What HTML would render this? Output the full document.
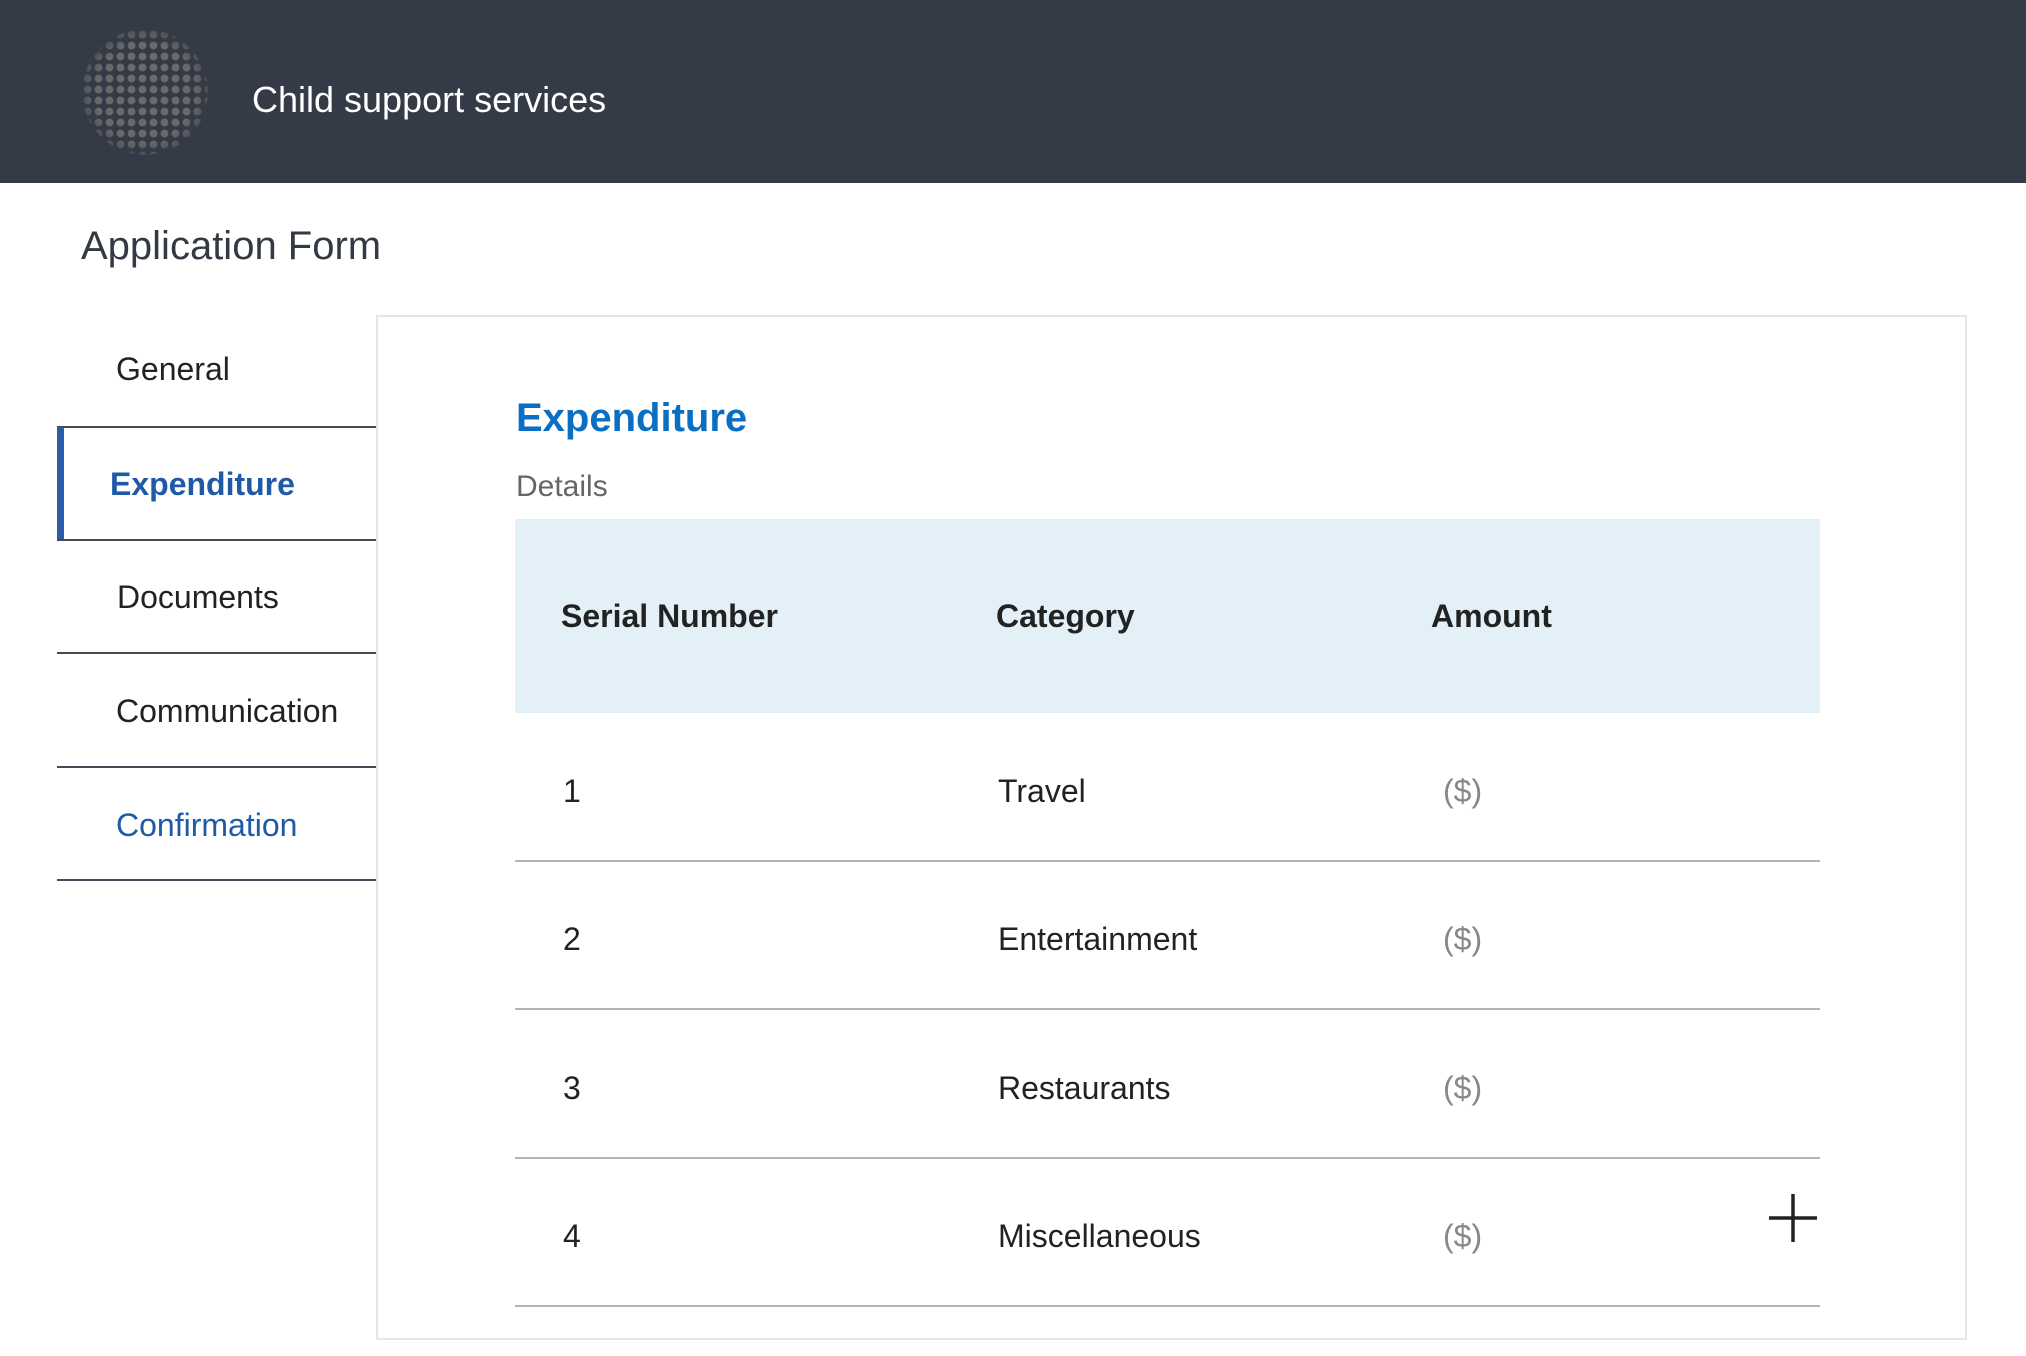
<!DOCTYPE html>
<html><head><meta charset="utf-8">
<style>
*{margin:0;padding:0;box-sizing:border-box}
body{width:2026px;height:1356px;background:#fff;font-family:"Liberation Sans",sans-serif;position:relative;overflow:hidden;color:#222}
.hdr{position:absolute;left:0;top:0;width:2026px;height:183px;background:#343a46}
.logo{position:absolute;left:82px;top:29px;width:126px;height:126px;border-radius:50%;
background:radial-gradient(circle,#6a6a6a 0 3.6px,transparent 4.2px) 0 0/11px 11px;
-webkit-mask-image:radial-gradient(circle,#000 55%,rgba(0,0,0,.5) 70%,transparent 72%);mask-image:radial-gradient(circle,#000 55%,rgba(0,0,0,.5) 70%,transparent 72%)}
.ttl{position:absolute;left:252px;top:78px;font-size:36px;color:#fff;line-height:44px}
.app{position:absolute;left:81px;top:222px;font-size:40px;color:#333a45;line-height:48px}
.card{position:absolute;left:376px;top:315px;width:1591px;height:1025px;border:2px solid #e6e6e6}
.nav{position:absolute;left:57px;width:319px;font-size:32px;line-height:40px}
.nav div{position:absolute;left:0;width:319px}
.ln{height:2px;background:#444b57}
.h2{position:absolute;left:516px;top:394px;font-size:40px;font-weight:bold;color:#0a6fc2;line-height:48px}
.det{position:absolute;left:516px;top:468px;font-size:30px;color:#666;line-height:38px}
.th{position:absolute;left:515px;top:519px;width:1305px;height:194px;background:#e3f0f8}
.t{position:absolute;font-size:32px;line-height:40px}
.b{font-weight:bold;color:#222}
.g{color:#888}
.rl{position:absolute;left:515px;width:1305px;height:2px;background:#b2b2b7}
</style></head><body>
<div class="hdr"><div class="logo"></div><div class="ttl">Child support services</div></div>
<div class="app">Application Form</div>
<div class="card"></div>
<div class="nav" style="top:0">
<div style="top:349px;left:59px">General</div>
<div class="ln" style="top:426px"></div>
<div style="top:427px;width:7px;height:114px;background:#2a5ca8"></div>
<div style="top:464px;left:53px;color:#1e5aa6;font-weight:bold">Expenditure</div>
<div class="ln" style="top:539px"></div>
<div style="top:577px;left:60px">Documents</div>
<div class="ln" style="top:652px"></div>
<div style="top:691px;left:59px">Communication</div>
<div class="ln" style="top:766px"></div>
<div style="top:805px;left:59px;color:#1e5aa6">Confirmation</div>
<div class="ln" style="top:879px"></div>
</div>
<div class="h2">Expenditure</div>
<div class="det">Details</div>
<div class="th"></div>
<div class="t b" style="left:561px;top:596px">Serial Number</div>
<div class="t b" style="left:996px;top:596px">Category</div>
<div class="t b" style="left:1431px;top:596px">Amount</div>

<div class="t" style="left:563px;top:771px">1</div>
<div class="t" style="left:998px;top:771px">Travel</div>
<div class="t g" style="left:1443px;top:771px">($)</div>
<div class="rl" style="top:860px"></div>

<div class="t" style="left:563px;top:919px">2</div>
<div class="t" style="left:998px;top:919px">Entertainment</div>
<div class="t g" style="left:1443px;top:919px">($)</div>
<div class="rl" style="top:1008px"></div>

<div class="t" style="left:563px;top:1068px">3</div>
<div class="t" style="left:998px;top:1068px">Restaurants</div>
<div class="t g" style="left:1443px;top:1068px">($)</div>
<div class="rl" style="top:1157px"></div>

<div class="t" style="left:563px;top:1216px">4</div>
<div class="t" style="left:998px;top:1216px">Miscellaneous</div>
<div class="t g" style="left:1443px;top:1216px">($)</div>
<div class="rl" style="top:1305px"></div>

<svg style="position:absolute;left:1769px;top:1194px" width="48" height="48" viewBox="0 0 48 48"><path d="M24 0V48M0 24H48" stroke="#222" stroke-width="3.5" fill="none"/></svg>
</body></html>
